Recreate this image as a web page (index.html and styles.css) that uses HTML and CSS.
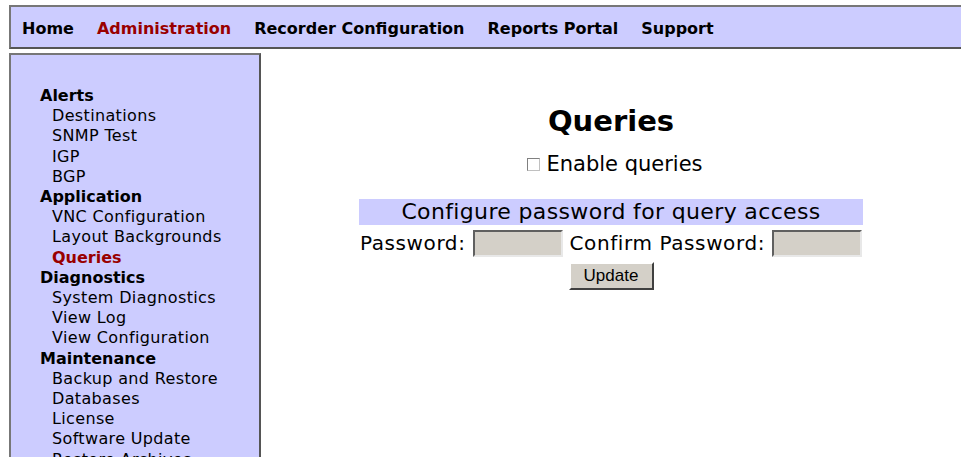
FILE: index.html
```html
<!DOCTYPE html>
<html>
<head>
<meta charset="utf-8">
<title>Queries</title>
<link rel="stylesheet" href="styles.css">
</head>
<body>
<div class="topnav">
  <a class="nav-link" href="#">Home</a>
  <a class="nav-link active" href="#">Administration</a>
  <a class="nav-link" href="#">Recorder Configuration</a>
  <a class="nav-link" href="#">Reports Portal</a>
  <a class="nav-link" href="#">Support</a>
</div>
<div class="layout">
  <div class="sidebar">
    <div class="group">Alerts</div>
    <a class="item" href="#">Destinations</a>
    <a class="item" href="#">SNMP Test</a>
    <a class="item" href="#">IGP</a>
    <a class="item" href="#">BGP</a>
    <div class="group">Application</div>
    <a class="item" href="#">VNC Configuration</a>
    <a class="item" href="#">Layout Backgrounds</a>
    <a class="item current" href="#">Queries</a>
    <div class="group">Diagnostics</div>
    <a class="item" href="#">System Diagnostics</a>
    <a class="item" href="#">View Log</a>
    <a class="item" href="#">View Configuration</a>
    <div class="group">Maintenance</div>
    <a class="item" href="#">Backup and Restore</a>
    <a class="item" href="#">Databases</a>
    <a class="item" href="#">License</a>
    <a class="item" href="#">Software Update</a>
    <a class="item" href="#">Restore Archives</a>
  </div>
  <div class="main">
    <h1 class="title">Queries</h1>
    <label class="enable"><input class="check" type="checkbox">Enable queries</label>
    <div class="form">
      <div class="form-head">Configure password for query access</div>
      <div class="form-row">
        <span>Password:</span>
        <input class="field" type="password">
        <span>Confirm Password:</span>
        <input class="field" type="password">
      </div>
      <div class="form-actions">
        <button class="btn" type="button">Update</button>
      </div>
    </div>
  </div>
</div>
</body>
</html>
```
FILE: styles.css
```css
html, body {
  margin: 0;
  padding: 0;
  overflow: hidden;
  background: #ffffff;
  font-family: "DejaVu Sans", Verdana, sans-serif;
  color: #000;
}

/* top navigation strip */
.topnav {
  margin: 5px -10px 0 9px;
  height: 40px;
  padding: 0 0 0 11px;
  background: #ccccff;
  border: 2px solid #555;
  border-top-color: #777;
  border-left-color: #777;
  display: flex;
  align-items: center;
  gap: 23px;
}
.nav-link {
  font-size: 16px;
  font-weight: bold;
  color: #000;
  text-decoration: none;
  padding-top: 2px;
}
.nav-link.active {
  color: #990000;
}

.layout {
  display: flex;
  margin-top: 4px;
}

/* left menu */
.sidebar {
  margin-left: 9px;
  width: 252px;
  min-height: 460px;
  flex: none;
  box-sizing: border-box;
  background: #ccccff;
  border: 2px solid #555;
  border-top-color: #777;
  border-left-color: #777;
  padding: 31px 0 0 29px;
  display: flex;
  flex-direction: column;
  font-size: 16px;
  line-height: 20.2px;
  letter-spacing: 0.35px;
}
.group {
  font-weight: bold;
  letter-spacing: 0;
}
.item {
  padding-left: 12px;
  color: #000;
  text-decoration: none;
}
.item.current {
  color: #990000;
  font-weight: bold;
  letter-spacing: 0;
}

/* content column */
.main {
  flex: 1;
  display: flex;
  flex-direction: column;
  align-items: center;
  padding-top: 51px;
}
.title {
  margin: 0;
  font-size: 29px;
  line-height: 34px;
  font-weight: bold;
}
.enable {
  margin-top: 13px;
  padding-left: 8px;
  display: flex;
  align-items: center;
  font-size: 21px;
  line-height: 26px;
}
.check {
  appearance: none;
  -webkit-appearance: none;
  margin: 1px 6px 0 0;
  width: 13px;
  height: 13px;
  box-sizing: border-box;
  border: 1px solid #808080;
  border-right-color: #c0c0c0;
  border-bottom-color: #c0c0c0;
  background: #fff;
}

.form {
  margin-top: 22px;
  width: 504px;
  display: flex;
  flex-direction: column;
  align-items: center;
}
.form-head {
  align-self: stretch;
  background: #ccccff;
  text-align: center;
  font-size: 22px;
  line-height: 26px;
  letter-spacing: 0.35px;
}
.form-row {
  margin-top: 5px;
  display: flex;
  align-items: center;
  gap: 7px;
  font-size: 20px;
  line-height: 27px;
  letter-spacing: 0.6px;
}
.field {
  width: 90px;
  height: 27px;
  box-sizing: border-box;
  margin: 0;
  background: #d4d0c8;
  border: 2px solid;
  border-color: #606060 #e8e8e8 #e8e8e8 #606060;
}
.form-actions {
  margin-top: 5px;
}
.btn {
  width: 85px;
  height: 28px;
  background: #d4d0c8;
  border: 2px solid;
  border-color: #ffffff #404040 #404040 #ffffff;
  font-family: "Liberation Sans", Arial, sans-serif;
  font-size: 17px;
  color: #000;
  padding: 0;
  margin: 0;
}
```
